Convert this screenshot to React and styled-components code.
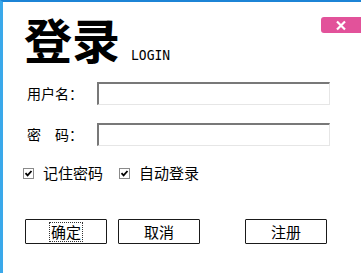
import React from "react";
import styled, { createGlobalStyle } from "styled-components";

const Global = createGlobalStyle`
  html, body { margin: 0; padding: 0; background: #fff; }
  body { font-family: "Noto Sans CJK SC", "Liberation Sans", sans-serif; }
`;

const Frame = styled.div`
  width: 361px;
  height: 273px;
  box-sizing: border-box;
  border-top: 2px solid #1c84d6;
  border-left: 3px solid #3aa8ea;
  background: #fff;
  display: flex;
  flex-direction: column;
  color: #000;
`;

const Header = styled.div`
  display: flex;
  justify-content: space-between;
  align-items: flex-start;
  height: 72px;
`;

const TitleGroup = styled.div`
  display: flex;
  align-items: flex-end;
  padding-left: 21px;
  padding-top: 9px;
`;

const Title = styled.h1`
  margin: 0;
  font: 700 48px/54px "Noto Sans CJK SC", sans-serif;
`;

const Sub = styled.span`
  font: 13px/13px "DejaVu Sans Mono", monospace;
  margin-left: 11px;
  margin-bottom: 3px;
  transform: scaleY(1.1);
`;

const Close = styled.button`
  margin-top: 15px;
  width: 40px;
  height: 16px;
  border: none;
  padding: 0;
  border-radius: 3px 0 0 3px;
  background: #e2529a;
  display: flex;
  align-items: center;
  justify-content: center;
`;

const Form = styled.div`
  display: flex;
  flex-direction: column;
  gap: 18px;
  padding-left: 24px;
  margin-top: 8px;
`;

const Row = styled.div`
  display: flex;
  align-items: center;
`;

const Label = styled.span`
  width: 70px;
  font: 14px/23px "Noto Sans CJK SC", sans-serif;
`;

const Input = styled.div`
  width: 233px;
  height: 23px;
  box-sizing: border-box;
  border-top: 2px solid #787878;
  border-left: 2px solid #787878;
  border-right: 1px solid #e6e6e6;
  border-bottom: 1px solid #e6e6e6;
  background: #fff;
`;

const Checks = styled.div`
  display: flex;
  align-items: center;
  padding-left: 20px;
  margin-top: 18px;
  gap: 16px;
`;

const CheckItem = styled.label`
  display: flex;
  align-items: center;
  gap: 9px;
  font: 15px/18px "Noto Sans CJK SC", sans-serif;
`;

const Box = styled.span`
  width: 11px;
  height: 11px;
  box-sizing: border-box;
  border: 1px solid #8a8a8a;
  background: #fff;
  display: flex;
  align-items: center;
  justify-content: center;
`;

const Buttons = styled.div`
  display: flex;
  padding-left: 22px;
  margin-top: 37px;
`;

const Btn = styled.button`
  width: 82px;
  height: 25px;
  box-sizing: border-box;
  border: 1px solid #1a1a1a;
  border-radius: 1px;
  background: #fff;
  padding: 0;
  margin-left: ${(p) => p.$gap || 0}px;
  font: 15px/18px "Noto Sans CJK SC", sans-serif;
  color: #000;
  display: flex;
  align-items: center;
  justify-content: center;
`;

const Focus = styled.span`
  outline: 1px dotted #333;
  outline-offset: 0px;
  padding: 0 1px;
`;

function Check({ children }) {
  return (
    <CheckItem>
      <Box>
        <svg width="9" height="9" viewBox="0 0 9 9">
          <path d="M1.5 4.2 L3.6 6.4 L7.5 2" stroke="#000" strokeWidth="1.8" fill="none" />
        </svg>
      </Box>
      {children}
    </CheckItem>
  );
}

export default function App() {
  return (
    <>
      <Global />
      <Frame>
        <Header>
          <TitleGroup>
            <Title>登录</Title>
            <Sub>LOGIN</Sub>
          </TitleGroup>
          <Close aria-label="关闭">
            <svg width="12" height="11" viewBox="0 0 12 11">
              <path d="M2 1.5 L10 9.5 M10 1.5 L2 9.5" stroke="#fff" strokeWidth="2.2" />
            </svg>
          </Close>
        </Header>
        <Form>
          <Row>
            <Label>用户名：</Label>
            <Input />
          </Row>
          <Row>
            <Label>密　码：</Label>
            <Input />
          </Row>
        </Form>
        <Checks>
          <Check>记住密码</Check>
          <Check>自动登录</Check>
        </Checks>
        <Buttons>
          <Btn><Focus>确定</Focus></Btn>
          <Btn $gap={11}>取消</Btn>
          <Btn $gap={45}>注册</Btn>
        </Buttons>
      </Frame>
    </>
  );
}
